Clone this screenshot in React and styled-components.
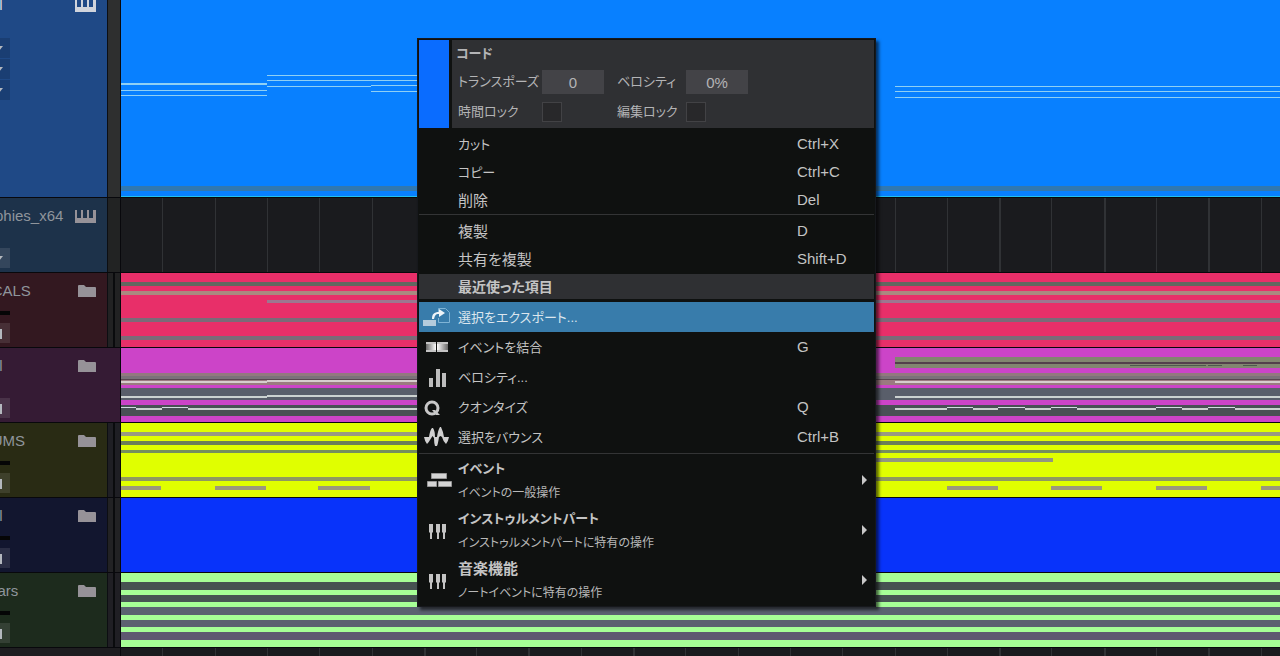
import React from "react";
import styled, { createGlobalStyle } from "styled-components";

const GRID_STEP = 52.3;
const GRID_START = 41.4;
const WIDE_LINES = [5, 7, 9, 16, 18, 20];

const TRACKS = [
  {
    name: "Final",
    kind: "instrument",
    height: 210,
    color: "#1f4986",
    strip: "#2e2f2f",
    clip: "#0880ff",
    selects: 3,
    bright: true,
    // x, y, width, height, colour
    notes: [
      [0, 96, 146, 2, "#8fd0f4"],
      [0, 103, 146, 1, "#8fd0f4"],
      [0, 108, 146, 1, "#8fd0f4"],
      [146, 88, 370, 1, "#8fd0f4"],
      [146, 93, 370, 1, "#8fd0f4"],
      [146, 99, 104, 1, "#8fd0f4"],
      [250, 98, 266, 1, "#8fd0f4"],
      [250, 104, 266, 1, "#8fd0f4"],
      [774, 99, "100%", 1, "#8fd0f4"],
      [774, 104, "100%", 1, "#8fd0f4"],
      [774, 110, "100%", 1, "#8fd0f4"],
      [0, 199, "100%", 5, "#3178b0"],
      [0, 209, "100%", 1, "#22c0ee"],
    ],
  },
  {
    name: "Graphies_x64",
    kind: "instrument",
    height: 74,
    color: "#1d324a",
    strip: "#222323",
    selects: 1,
    notes: [],
  },
  {
    name: "VOCALS",
    kind: "folder",
    height: 74,
    color: "#331820",
    strip: "#222223",
    clip: "#e82f69",
    notes: [
      [0, 9, "100%", 4, "#626760"],
      [0, 18, "100%", 4, "#aa8980"],
      [146, 27, "100%", 3, "#9d7690"],
      [0, 45, "100%", 4, "#7c6a78"],
      [0, 63, "100%", 4, "#7c6a78"],
    ],
  },
  {
    name: "Final",
    kind: "folder",
    plain: true,
    height: 74,
    color: "#351b34",
    strip: "#351b34",
    clip: "#cc44c8",
    notes: [
      [0, 25, "100%", 3, "#93787f"],
      [0, 28, "100%", 3, "#7b7279"],
      [0, 31, "100%", 1, "#594650"],
      [0, 32, "100%", 5, "#9b7a80"],
      [0, 40, "100%", 12, "#595e6a"],
      [0, 57, "100%", 11, "#495055"],
      [774, 9, "100%", 11, "#828670"],
      [774, 14, "100%", 2, "#54404c"],
      [1009, 17, 76, 1, "#4d5a4c"],
      [1087, 17, 14, 1, "#4d5a4c"],
      [1122, 17, 14, 1, "#4d5a4c"],
      [0, 33, 146, 2, "#d6cdcd"],
      [146, 32, 400, 2, "#d6cdcd"],
      [774, 33, "100%", 2, "#d6cdcd"],
      [0, 48, 146, 2, "#ccd2d0"],
      [146, 47, 400, 2, "#ccd2d0"],
      [774, 48, "100%", 2, "#ccd2d0"],
      [0, 59, 15, 1, "#d3dbe2"],
      [15, 60, 26, 2, "#ccd2d0"],
      [41, 59, 26, 1, "#d3dbe2"],
      [67, 60, 400, 2, "#ccd2d0"],
      [774, 60, 52, 2, "#ccd2d0"],
      [826, 59, 26, 1, "#d3dbe2"],
      [852, 60, 25, 2, "#ccd2d0"],
      [877, 59, 27, 1, "#d3dbe2"],
      [904, 60, 26, 2, "#ccd2d0"],
      [930, 59, 26, 1, "#d3dbe2"],
      [956, 60, 79, 2, "#ccd2d0"],
      [1035, 59, 26, 1, "#d3dbe2"],
      [1061, 60, 26, 2, "#ccd2d0"],
      [1087, 59, 27, 1, "#d3dbe2"],
      [1114, 60, "100%", 2, "#ccd2d0"],
    ],
  },
  {
    name: "DRUMS",
    kind: "folder",
    height: 74,
    color: "#292b14",
    strip: "#1f1f24",
    clip: "#e0ff00",
    notes: [
      [0, 9, "100%", 4, "#999a80"],
      [0, 18, "100%", 4, "#6c7f58"],
      [0, 27, "100%", 3, "#768f5c"],
      [410, 35, 522, 4, "#929680"],
      [0, 54, "100%", 4, "#8f9960"],
      [0, 63, 40, 4, "#9c987c"],
      [94, 63, 51, 4, "#9c987c"],
      [197, 63, 52, 4, "#9c987c"],
      [826, 63, 51, 4, "#9c987c"],
      [930, 63, 51, 4, "#9c987c"],
      [1035, 63, 51, 4, "#9c987c"],
      [1140, 63, 51, 4, "#9c987c"],
    ],
  },
  {
    name: "Final",
    kind: "folder",
    height: 74,
    color: "#12162f",
    strip: "#222224",
    clip: "#0833fa",
    notes: [],
  },
  {
    name: "Guitars",
    kind: "folder",
    height: 74,
    color: "#1d2b1d",
    strip: "#201f24",
    clip: "#a6ff96",
    notes: [
      [0, 9, "100%", 8, "#465251"],
      [0, 22, "100%", 7, "#465452"],
      [0, 34, "100%", 8, "#5a6270"],
      [0, 47, "100%", 7, "#5c6070"],
      [0, 59, "100%", 8, "#5e5870"],
    ],
  },
];

const EDIT_ITEMS = [
  { label: "カット", keys: "Ctrl+X" },
  { label: "コピー", keys: "Ctrl+C" },
  { label: "削除", keys: "Del", kanji: true },
];

const DUPLICATE_ITEMS = [
  { label: "複製", keys: "D", kanji: true },
  { label: "共有を複製", keys: "Shift+D", kanji: true },
];

const RECENT_ITEMS = [
  { label: "選択をエクスポート...", icon: ExportIcon, active: true },
  { label: "イベントを結合", keys: "G", icon: MergeIcon },
  { label: "ベロシティ...", icon: VelocityIcon },
  { label: "クオンタイズ", keys: "Q", icon: QuantizeIcon },
  { label: "選択をバウンス", keys: "Ctrl+B", icon: BounceIcon },
];

const SUBMENUS = [
  { label: "イベント", hint: "イベントの一般操作", icon: EventIcon },
  {
    label: "インストゥルメントパート",
    hint: "インストゥルメントパートに特有の操作",
    icon: KeysIcon,
  },
  {
    label: "音楽機能",
    hint: "ノートイベントに特有の操作",
    icon: KeysIcon,
    kanji: true,
  },
];

export default function App() {
  return (
    <>
      <GlobalStyle />
      <Workspace>
        <TrackList>
          {TRACKS.map((track, i) => (
            <Track key={i} track={track} />
          ))}
          <EmptyRow>
            <EmptyHeader />
            <Lane>
              <GridLines />
            </Lane>
          </EmptyRow>
        </TrackList>
        <ContextMenu />
      </Workspace>
    </>
  );
}

function Track({ track }) {
  return (
    <TrackRow $height={track.height}>
      <TrackHeader $color={track.color} $plain={track.plain}>
        <TrackInfo>
          <TrackName $bright={track.bright}>{track.name}</TrackName>
          {track.kind === "instrument" ? (
            <SelectStack $tall={track.selects > 1}>
              {Array.from({ length: track.selects }, (_, i) => (
                <SmallButton key={i} $dark={track.bright} aria-label="open list">
                  <svg width="8" height="5" viewBox="0 0 8 5">
                    <path d="M0 0H8L4 5Z" fill="currentColor" />
                  </svg>
                </SmallButton>
              ))}
            </SelectStack>
          ) : (
            <>
              <Fader $hidden={track.plain} />
              <SmallButton aria-label="monitor">
                <svg width="8" height="14" viewBox="0 0 8 14">
                  <path d="M0 7L5 3H7V13H0Z" fill="currentColor" />
                </svg>
              </SmallButton>
            </>
          )}
        </TrackInfo>
        <TrackIcon $bright={track.bright}>
          {track.kind === "instrument" ? <PianoIcon /> : <FolderIcon />}
        </TrackIcon>
      </TrackHeader>
      <Strip
        $color={track.strip}
        $folder={track.kind === "folder" && !track.plain}
      />
      <Lane $color={track.clip}>
        {track.clip ? (
          <LaneDrawing aria-hidden="true">
            {track.notes.map(([x, y, w, h, fill], i) => (
              <rect key={i} x={x} y={y} width={w} height={h} fill={fill} />
            ))}
          </LaneDrawing>
        ) : (
          <GridLines />
        )}
      </Lane>
    </TrackRow>
  );
}

function GridLines() {
  return (
    <LaneDrawing aria-hidden="true">
      {Array.from({ length: 50 }, (_, i) => (
        <rect
          key={i}
          x={Math.round(GRID_START + i * GRID_STEP)}
          y="0"
          width={WIDE_LINES.includes(i) ? 2 : 1}
          height="100%"
          fill="#303235"
        />
      ))}
    </LaneDrawing>
  );
}

function ContextMenu() {
  return (
    <Menu>
      <PartPanel>
        <Swatch />
        <PartFields>
          <PartTitle>コード</PartTitle>
          <FieldGrid>
            <label htmlFor="transpose">トランスポーズ</label>
            <NumberBox id="transpose" defaultValue="0" />
            <label htmlFor="velocity">ベロシティ</label>
            <NumberBox id="velocity" defaultValue="0%" />
            <label htmlFor="time-lock">時間ロック</label>
            <CheckBox id="time-lock" type="checkbox" />
            <label htmlFor="edit-lock">編集ロック</label>
            <CheckBox id="edit-lock" type="checkbox" />
          </FieldGrid>
        </PartFields>
      </PartPanel>
      <Group>
        {EDIT_ITEMS.map((item) => (
          <Item key={item.label} item={item} />
        ))}
      </Group>
      <Divider />
      <Group>
        {DUPLICATE_ITEMS.map((item) => (
          <Item key={item.label} item={item} />
        ))}
      </Group>
      <Heading>最近使った項目</Heading>
      {RECENT_ITEMS.map((item) => (
        <Item key={item.label} item={item} tall />
      ))}
      <Divider $spaced />
      {SUBMENUS.map(({ label, hint, kanji, icon: Icon }) => (
        <SubmenuItem key={label}>
          <IconCell>
            <Icon />
          </IconCell>
          <SubmenuText>
            <SubmenuTitle $kanji={kanji}>{label}</SubmenuTitle>
            <SubmenuHint>{hint}</SubmenuHint>
          </SubmenuText>
          <svg width="5" height="10" viewBox="0 0 5 10">
            <path d="M0 0L5 5L0 10Z" fill="#c8c8c8" />
          </svg>
        </SubmenuItem>
      ))}
    </Menu>
  );
}

function Item({ item, tall }) {
  const Icon = item.icon;
  return (
    <MenuItem $tall={tall} $active={item.active}>
      <IconCell>{Icon && <Icon />}</IconCell>
      <ItemLabel $kanji={item.kanji}>{item.label}</ItemLabel>
      <span>{item.keys}</span>
    </MenuItem>
  );
}

function PianoIcon() {
  return (
    <svg width="21" height="13" viewBox="0 0 21 13">
      <path
        d="M0 0H2V8H6V0H8V8H12V0H14V8H18V0H21V13H0Z"
        fill="currentColor"
      />
    </svg>
  );
}

function FolderIcon() {
  return (
    <svg width="18" height="12" viewBox="0 0 18 12">
      <path d="M0 1Q0 0 1 0H6L8 2H17Q18 2 18 3V12H0Z" fill="currentColor" />
    </svg>
  );
}

function ExportIcon() {
  return (
    <svg width="28" height="20" viewBox="0 0 28 20">
      <path
        d="M15.500 5V1.500H22.500L26.500 5.500V15.500H15.500V11"
        fill="none"
        stroke="#7fb4d6"
      />
      <rect x="0" y="13" width="13" height="6" fill="#b4cbdc" />
      <path
        d="M9 12C9 7 11 5 16 5V2L22 6L16 10V7C12 7 12 9 11 12Z"
        fill="#eef4f8"
      />
    </svg>
  );
}

function MergeIcon() {
  return (
    <svg width="28" height="20" viewBox="0 0 28 20">
      <defs>
        <linearGradient id="mergeLeft">
          <stop offset="0" stopColor="#666" />
          <stop offset="1" stopColor="#fff" />
        </linearGradient>
        <linearGradient id="mergeRight">
          <stop offset="0" stopColor="#fff" />
          <stop offset="1" stopColor="#666" />
        </linearGradient>
      </defs>
      <rect x="3" y="5" width="10" height="10" fill="url(#mergeLeft)" />
      <rect x="14" y="5" width="11" height="10" fill="url(#mergeRight)" />
      <path d="M3 6H13M3 14H13M14 6H25M14 14H25" stroke="#c4c4c4" strokeWidth="2" />
    </svg>
  );
}

function VelocityIcon() {
  return (
    <svg width="28" height="20" viewBox="0 0 28 20">
      <path d="M6 11H10V20H6ZM13 2H17V20H13ZM19 6H23V20H19Z" fill="#bdbdbd" />
    </svg>
  );
}

function QuantizeIcon() {
  return (
    <svg width="28" height="20" viewBox="0 0 28 20">
      <circle cx="9" cy="11" r="6" fill="none" stroke="#c8c8c8" strokeWidth="3" />
      <path d="M9 13H12L17 18H13Z" fill="#c8c8c8" />
    </svg>
  );
}

function BounceIcon() {
  return (
    <svg width="28" height="20" viewBox="0 0 28 20">
      <path
        d="M1 10H6Q7 3 9 1H10Q12 4 12 10H14Q15 3 17 0H18Q20 4 21 10H26Q25 15 23 17Q20 14 19 10L17.500 9L16 10Q15 17 14 19H12Q11 16 11 11L9.500 9L7 13Q6 15 4 17Q2 15 1 10Z"
        fill="#d0d0d0"
      />
    </svg>
  );
}

function EventIcon() {
  return (
    <svg width="30" height="20" viewBox="0 0 30 20">
      <g fill="#d4d4d4" stroke="#969696">
        <path d="M8.500 3.500H23.500V8.500H8.500Z" />
        <path d="M4.500 11.500H13.500V16.500H4.500Z" />
        <path d="M15.500 11.500H28.500V16.500H15.500Z" />
      </g>
    </svg>
  );
}

function KeysIcon() {
  return (
    <svg width="28" height="20" viewBox="0 0 28 20">
      <path
        d="M6 4H10V12L9 13V19H7V13L6 12ZM13 4H17V12L16 13V19H14V13L13 12ZM19 4H23V12L22 13V19H20V13L19 12Z"
        fill="#c4c4c4"
      />
    </svg>
  );
}

const GlobalStyle = createGlobalStyle`
  * {
    box-sizing: border-box;
  }

  body {
    margin: 0;
    background: #1b1c1f;
    font-family: "Liberation Sans", "Noto Sans CJK JP", sans-serif;
    font-size: 15px;
    line-height: 20px;
  }

  button,
  input {
    font: inherit;
    color: inherit;
    border: 0;
    margin: 0;
    padding: 0;
  }
`;

const Workspace = styled.main`
  position: relative;
  height: 100vh;
  overflow: hidden;
`;

/* the list is scrolled a little way down its first track */
const TrackList = styled.div`
  display: flex;
  flex-direction: column;
  height: calc(100% + 13px);
  margin-top: -13px;
`;

const TrackRow = styled.section`
  display: grid;
  grid-template-columns: auto auto 1fr;
  grid-template-rows: 100%;
  flex: none;
  height: ${(p) => p.$height + 1}px;
  border-bottom: 1px solid #08080c;
`;

const EmptyRow = styled.div`
  display: grid;
  grid-template-columns: 121px 1fr;
  grid-template-rows: 100%;
  flex: 1;
  min-height: 0;
`;

const EmptyHeader = styled.div`
  background: #1e1d20;
  border-right: 1px solid #08080c;
`;

const TrackHeader = styled.header`
  display: flex;
  justify-content: space-between;
  width: 108px;
  overflow: hidden;
  background: ${(p) => p.$color};
  padding-right: 11px;
  border-right: 1px solid ${(p) => (p.$plain ? p.$color : "#0c0e12")};
`;

const TrackInfo = styled.div`
  display: flex;
  flex-direction: column;
  flex: none;
  align-items: flex-start;
  width: 94px;
  margin-left: -30px;
  padding-top: 8px;
`;

const TrackName = styled.span`
  color: ${(p) => (p.$bright ? "#d8dce4" : "#8f959c")};
`;

const SelectStack = styled.div`
  display: flex;
  flex-direction: column;
  gap: 1px;
  margin-top: ${(p) => (p.$tall ? 23 : 22)}px;
`;

const SmallButton = styled.button`
  display: flex;
  align-items: center;
  justify-content: flex-end;
  width: 40px;
  height: 20px;
  padding-right: 7px;
  background: ${(p) =>
    p.$dark ? "rgba(0, 0, 0, 0.14)" : "rgba(255, 255, 255, 0.1)"};
  color: #b4b8be;
`;

const Fader = styled.div`
  width: 40px;
  height: 4px;
  margin: 10px 0 8px;
  background: ${(p) => (p.$hidden ? "transparent" : "#050506")};
`;

const TrackIcon = styled.span`
  display: flex;
  align-items: center;
  height: 12px;
  margin-top: 12px;
  color: ${(p) => (p.$bright ? "#d0d4dc" : "#969298")};
`;

const Strip = styled.div`
  width: 13px;
  background: ${(p) => p.$color};
  border-right: 1px solid #08080c;
  ${(p) =>
    p.$folder &&
    `background: linear-gradient(to right, ${p.$color} 5px, #0a0b0d 5px, #0a0b0d 7px, ${p.$color} 7px);`}
`;

const Lane = styled.div`
  display: flex;
  min-width: 0;
  background: ${(p) => p.$color || "#1a1b1e"};
`;

const LaneDrawing = styled.svg`
  width: 100%;
  height: 100%;
`;

const Menu = styled.div`
  position: absolute;
  left: 417px;
  top: 38px;
  width: 459px;
  padding: 1px;
  border: 1px solid #16181c;
  background: #0f1110;
  color: #c4c4c4;
  font-feature-settings: "palt";
  box-shadow: 3px 3px 3px rgba(0, 0, 0, 0.6);
`;

const PartPanel = styled.div`
  display: flex;
  gap: 3px;
  height: 88px;
`;

const Swatch = styled.div`
  width: 30px;
  background: #0a6cff;
`;

const PartFields = styled.div`
  flex: 1;
  padding: 4px 4px 0;
  background: #2f3033;
  color: #b4b4b6;
`;

const PartTitle = styled.h2`
  margin: 0 0 3px;
  font-size: 13px;
  font-weight: 700;
  line-height: 20px;
`;

const FieldGrid = styled.div`
  display: grid;
  grid-template-columns: 84px 75px 69px 62px;
  grid-auto-rows: 30px;
  align-items: center;
  padding-left: 2px;
  font-size: 13px;
  white-space: nowrap;
`;

const NumberBox = styled.input`
  width: 62px;
  height: 24px;
  background: #434347;
  font-size: 15px;
  text-align: center;
`;

const CheckBox = styled.input`
  appearance: none;
  width: 20px;
  height: 20px;
  background: #28282a;
  border: 1px solid #424245;
`;

const Group = styled.div`
  padding-top: 2px;
`;

const Divider = styled.hr`
  height: 1px;
  margin: ${(p) => (p.$spaced ? "1px 0" : 0)};
  border: 0;
  background: #333435;
`;

const MenuItem = styled.button`
  display: grid;
  grid-template-columns: 39px 1fr 77px;
  align-items: center;
  width: 100%;
  height: ${(p) => (p.$tall ? 30 : 28)}px;
  background: ${(p) => (p.$active ? "#387cab" : "transparent")};
  color: ${(p) => (p.$active ? "#dce6ee" : "inherit")};
  text-align: left;
`;

const ItemLabel = styled.span`
  padding-top: 1px;
  font-size: ${(p) => (p.$kanji ? 15 : 13)}px;
`;

const IconCell = styled.span`
  display: flex;
  align-items: center;
  padding-left: 4px;
`;

const Heading = styled.h3`
  height: 25px;
  margin: 1px 0 3px;
  padding-left: 39px;
  background: #2f3033;
  font-size: 14px;
  font-weight: 700;
  line-height: 26px;
`;

const SubmenuItem = styled.button`
  display: grid;
  grid-template-columns: 39px 1fr auto;
  align-items: center;
  width: 100%;
  height: 50px;
  padding-right: 7px;
  background: transparent;
  text-align: left;
`;

const SubmenuText = styled.span`
  padding-top: 2px;
`;

const SubmenuTitle = styled.strong`
  display: block;
  font-size: ${(p) => (p.$kanji ? 15 : 13)}px;
  font-weight: 700;
  line-height: 24px;
`;

const SubmenuHint = styled.span`
  display: block;
  color: #b8b8b8;
  font-size: 12px;
  line-height: 24px;
`;
